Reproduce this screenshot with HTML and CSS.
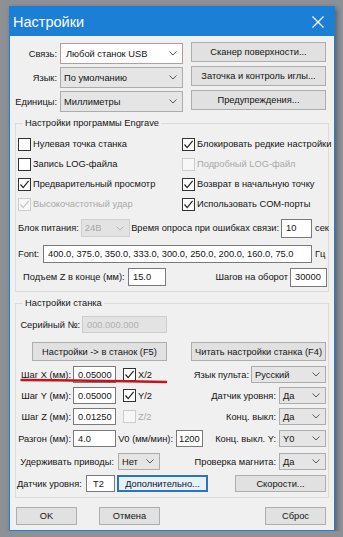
FILE: index.html
```html
<!DOCTYPE html>
<html lang="ru">

<head>
    <meta charset="utf-8">
    <title>Настройки</title>
    <link rel="stylesheet" href="styles.css">
</head>

<body>
    <div class="window">
        <div class="titlebar">
            <span class="title">Настройки</span>
            <svg class="close" viewBox="0 0 12 12">
                <path d="M0.5 0.5 L11.5 11.5 M11.5 0.5 L0.5 11.5" />
            </svg>
        </div>

        <div class="client">
            <div class="top">
                <div class="top-fields">
                    <span class="lbl">Связь:</span>
                    <div class="combo edit">Любой станок USB
                        <svg class="arrow" viewBox="0 0 8 5"><path d="M0.5 0.5 L4 4 L7.5 0.5" /></svg>
                    </div>
                    <span class="lbl">Язык:</span>
                    <div class="combo">По умолчанию
                        <svg class="arrow" viewBox="0 0 8 5"><path d="M0.5 0.5 L4 4 L7.5 0.5" /></svg>
                    </div>
                    <span class="lbl">Единицы:</span>
                    <div class="combo">Миллиметры
                        <svg class="arrow" viewBox="0 0 8 5"><path d="M0.5 0.5 L4 4 L7.5 0.5" /></svg>
                    </div>
                </div>
                <div class="top-buttons">
                    <button class="btn">Сканер поверхности...</button>
                    <button class="btn">Заточка и контроль иглы...</button>
                    <button class="btn">Предупреждения...</button>
                </div>
            </div>

            <fieldset class="group group-prog">
                <legend>Настройки программы Engrave</legend>
                <div class="checks">
                    <div class="check"><span class="box"></span>Нулевая точка станка</div>
                    <div class="check"><span class="box"><svg viewBox="0 0 11 11"><path d="M1.5 5.5 L4.2 8.6 L9.6 1.8" /></svg></span>Блокировать редкие настройки</div>
                    <div class="check"><span class="box"></span>Запись LOG-файла</div>
                    <div class="check disabled"><span class="box"></span>Подробный LOG-файл</div>
                    <div class="check"><span class="box"><svg viewBox="0 0 11 11"><path d="M1.5 5.5 L4.2 8.6 L9.6 1.8" /></svg></span>Предварительный просмотр</div>
                    <div class="check"><span class="box"><svg viewBox="0 0 11 11"><path d="M1.5 5.5 L4.2 8.6 L9.6 1.8" /></svg></span>Возврат в начальную точку</div>
                    <div class="check disabled"><span class="box"><svg viewBox="0 0 11 11"><path d="M1.5 5.5 L4.2 8.6 L9.6 1.8" /></svg></span>Высокочастотный удар</div>
                    <div class="check"><span class="box"><svg viewBox="0 0 11 11"><path d="M1.5 5.5 L4.2 8.6 L9.6 1.8" /></svg></span>Использовать COM-порты</div>
                </div>

                <div class="row row-power">
                    <span class="lbl-power">Блок питания:</span>
                    <div class="combo disabled w-power">24В
                        <svg class="arrow" viewBox="0 0 8 5"><path d="M0.5 0.5 L4 4 L7.5 0.5" /></svg>
                    </div>
                    <span class="lbl-poll">Время опроса при ошибках связи:</span>
                    <div class="field w-poll">10</div>
                    <span class="unit">сек</span>
                </div>

                <div class="row row-font">
                    <span class="lbl-font">Font:</span>
                    <div class="field w-font">400.0, 375.0, 350.0, 333.0, 300.0, 250.0, 200.0, 160.0, 75.0</div>
                    <span class="unit">Гц</span>
                </div>

                <div class="row row-lift">
                    <span class="lbl-lift">Подъем Z в конце (мм):</span>
                    <div class="field w-lift">15.0</div>
                    <span class="lbl-steps">Шагов на оборот</span>
                    <div class="field w-steps">30000</div>
                </div>
            </fieldset>

            <fieldset class="group group-machine">
                <legend>Настройки станка</legend>

                <div class="row row-serial">
                    <span class="lbl-serial">Серийный №:</span>
                    <div class="field disabled w-serial">000.000.000</div>
                </div>

                <div class="row row-buttons">
                    <button class="btn w-wide first">Настройки -&gt; в станок (F5)</button>
                    <button class="btn w-wide">Читать настройки станка (F4)</button>
                </div>

                <div class="row row-step step-x">
                    <span class="lbl-step">Шаг X (мм):</span>
                    <div class="field w-step">0.05000</div>
                    <div class="check half"><span class="box"><svg viewBox="0 0 11 11"><path d="M1.5 5.5 L4.2 8.6 L9.6 1.8" /></svg></span>X/2</div>
                    <div class="right">
                        <span>Язык пульта:</span>
                        <div class="combo w-lang">Русский
                            <svg class="arrow" viewBox="0 0 8 5"><path d="M0.5 0.5 L4 4 L7.5 0.5" /></svg>
                        </div>
                    </div>
                    <svg class="underline" viewBox="0 0 148 6">
                        <path d="M1.5 2 Q 70 2.6 146 4" />
                    </svg>
                </div>

                <div class="row row-step step-y">
                    <span class="lbl-step">Шаг Y (мм):</span>
                    <div class="field w-step">0.05000</div>
                    <div class="check half"><span class="box"><svg viewBox="0 0 11 11"><path d="M1.5 5.5 L4.2 8.6 L9.6 1.8" /></svg></span>Y/2</div>
                    <div class="right">
                        <span>Датчик уровня:</span>
                        <div class="combo w-yn">Да
                            <svg class="arrow" viewBox="0 0 8 5"><path d="M0.5 0.5 L4 4 L7.5 0.5" /></svg>
                        </div>
                    </div>
                </div>

                <div class="row row-step step-z">
                    <span class="lbl-step">Шаг Z (мм):</span>
                    <div class="field w-step">0.01250</div>
                    <div class="check half disabled"><span class="box"></span>Z/2</div>
                    <div class="right">
                        <span>Конц. выкл:</span>
                        <div class="combo w-yn">Да
                            <svg class="arrow" viewBox="0 0 8 5"><path d="M0.5 0.5 L4 4 L7.5 0.5" /></svg>
                        </div>
                    </div>
                </div>

                <div class="row row-step row-accel">
                    <span class="lbl-step">Разгон (мм):</span>
                    <div class="field w-step">4.0</div>
                    <span class="lbl-v0">V0 (мм/мин):</span>
                    <div class="field w-v0">1200</div>
                    <div class="right">
                        <span>Конц. выкл. Y:</span>
                        <div class="combo w-yn">Y0
                            <svg class="arrow" viewBox="0 0 8 5"><path d="M0.5 0.5 L4 4 L7.5 0.5" /></svg>
                        </div>
                    </div>
                </div>

                <div class="row row-step row-hold">
                    <span class="lbl-hold">Удерживать приводы:</span>
                    <div class="combo w-hold">Нет
                        <svg class="arrow" viewBox="0 0 8 5"><path d="M0.5 0.5 L4 4 L7.5 0.5" /></svg>
                    </div>
                    <div class="right">
                        <span>Проверка магнита:</span>
                        <div class="combo w-yn">Да
                            <svg class="arrow" viewBox="0 0 8 5"><path d="M0.5 0.5 L4 4 L7.5 0.5" /></svg>
                        </div>
                    </div>
                </div>

                <div class="row row-step row-sensor">
                    <span class="lbl-sensor">Датчик уровня:</span>
                    <div class="field w-sensor">T2</div>
                    <button class="btn focus w-more">Дополнительно...</button>
                    <button class="btn w-more push">Скорости...</button>
                </div>
            </fieldset>

            <div class="footer">
                <button class="btn w-foot">OK</button>
                <button class="btn w-foot">Отмена</button>
                <button class="btn w-foot push">Сброс</button>
            </div>
        </div>
    </div>
</body>

</html>
```

FILE: styles.css
```css
body {
    margin: 0;
    background-color: #8d9094;
    font-family: "Liberation Sans", Arial, sans-serif;
    font-size: 9.3px;
    color: #141414;
}

.window {
    width: 326px;
    margin: 6px 0 0 9px;
    box-sizing: border-box;
    border: 1px solid #1c7fd6;
    background-color: #f0f0f0;
    box-shadow: 2px 2px 5px rgba(0, 0, 0, 0.35);
}

.titlebar {
    display: flex;
    align-items: center;
    justify-content: space-between;
    height: 29px;
    padding: 0 10px 0 3px;
    background-color: #1c7fd6;
    color: #fff;
}

.title {
    font-size: 14.5px;
}

.close {
    width: 12px;
    height: 12px;
}

.close path {
    fill: none;
    stroke: #fff;
    stroke-width: 1.3;
}

.client {
    padding-bottom: 5px;
}

/* top block: combos on the left, buttons on the right */
.top {
    display: flex;
    padding-top: 6px;
}

.top-fields {
    display: grid;
    grid-template-columns: 47px 123px;
    grid-auto-rows: 21px;
    column-gap: 3px;
    row-gap: 3px;
    margin-top: 1px;
}

.top-fields .lbl {
    align-self: center;
    text-align: right;
}

.top-buttons {
    display: flex;
    flex-direction: column;
    gap: 4px;
    width: 135px;
    margin-left: 8px;
}

.top-buttons .btn {
    height: 20px;
}

/* controls */
.btn {
    box-sizing: border-box;
    height: 19px;
    padding: 0;
    background-color: #e1e1e1;
    border: 1px solid #adadad;
    color: #141414;
    font: inherit;
    white-space: nowrap;
}

.btn.focus {
    border: 2px solid #2f74b5;
    background-color: #e5f1fb;
}

.combo {
    display: flex;
    align-items: center;
    justify-content: space-between;
    box-sizing: border-box;
    height: 17px;
    padding: 0 5px 0 3px;
    background-color: #e5e5e5;
    border: 1px solid #acacac;
    white-space: nowrap;
}

.top-fields .combo {
    height: 21px;
}

.combo.edit {
    background-color: #fff;
    border-color: #b89c9c;
    padding-left: 5px;
}

.combo.disabled {
    background-color: #e3e3e3;
    border-color: #cfcfcf;
    color: #a8a8a8;
}

.arrow {
    flex: none;
    width: 8px;
    height: 5px;
}

.arrow path {
    fill: none;
    stroke: #5a5a5a;
    stroke-width: 1;
}

.combo.disabled .arrow path {
    stroke: #b5b5b5;
}

.field {
    display: flex;
    align-items: center;
    box-sizing: border-box;
    height: 17px;
    padding: 0 4px;
    background-color: #fff;
    border: 1px solid #7a7a7a;
    white-space: nowrap;
    overflow: hidden;
}

.field.disabled {
    background-color: #e3e3e3;
    border-color: #cdcdcd;
    color: #b0b0b0;
}

/* group boxes */
.group {
    margin: 5px 5px 0;
    padding: 5px 2px 5px;
    border: 1px solid #dcdcdc;
    min-width: 0;
}

.group legend {
    margin-left: 5px;
    padding: 0 2px;
    line-height: 12px;
}

.group-machine {
    padding-top: 7px;
}

.checks {
    display: grid;
    grid-template-columns: 164px 1fr;
    grid-auto-rows: 20px;
}

.check {
    display: flex;
    align-items: center;
    gap: 2px;
    white-space: nowrap;
}

.box {
    display: flex;
    align-items: center;
    justify-content: center;
    box-sizing: border-box;
    width: 13px;
    height: 13px;
    background-color: #fff;
    border: 1px solid #333;
}

.box svg {
    width: 11px;
    height: 11px;
}

.box path {
    fill: none;
    stroke: #222;
    stroke-width: 1.2;
}

.check.disabled {
    color: #a8a8a8;
}

.check.disabled .box {
    border-color: #cccccc;
    background-color: #f7f7f7;
}

.check.disabled .box path {
    stroke: #c4c4c4;
}

.row {
    display: flex;
    align-items: center;
    white-space: nowrap;
}

.unit {
    margin-left: 3px;
    width: 11px;
}

/* group 1 rows */
.row-power {
    height: 20px;
    margin-top: 4px;
}

.row-power .combo {
    height: 18px;
}

.lbl-power {
    flex: none;
    margin-right: 2px;
}

.w-power {
    width: 49px;
}

.lbl-poll {
    flex: 1;
    text-align: right;
    padding-right: 2px;
}

.w-poll {
    width: 31px;
    height: 19px;
}

.row-font {
    height: 18px;
    margin-top: 7px;
}

.lbl-font {
    width: 25px;
}

.w-font {
    width: 269px;
    height: 18px;
}

.row-lift {
    height: 18px;
    margin-top: 5px;
}

.lbl-lift {
    width: 105px;
    margin-left: 5px;
}

.w-lift {
    width: 38px;
    height: 18px;
}

.lbl-steps {
    margin-left: auto;
    margin-right: 2px;
}

.w-steps {
    width: 37px;
    height: 19px;
    margin-right: -1px;
}

/* group 2 rows */
.row-serial {
    height: 17px;
}

.lbl-serial {
    width: 62px;
    padding-right: 2px;
    text-align: right;
}

.w-serial {
    width: 85px;
}

.row-buttons {
    margin-top: 9px;
}

.w-wide {
    width: 135px;
}

.w-wide.first {
    margin-left: 14px;
    margin-right: auto;
}

.row-step {
    height: 17px;
}

.step-x {
    position: relative;
    margin-top: 5px;
}

.step-y,
.step-z {
    margin-top: 4px;
}

.row-accel {
    margin-top: 5px;
}

.row-hold {
    margin-top: 6px;
}

.row-sensor {
    margin-top: 5px;
}

.lbl-step {
    width: 53px;
    padding-right: 2px;
    text-align: right;
}

.w-step {
    width: 43px;
}

.check.half {
    margin-left: 7px;
}

.right {
    display: flex;
    align-items: center;
    gap: 3px;
    margin-left: auto;
}

.w-yn {
    width: 47px;
}

.w-lang {
    width: 75px;
}

.step-x .right {
    gap: 2px;
}

.lbl-v0 {
    width: 57px;
    padding-right: 3px;
    text-align: right;
}

.w-v0 {
    width: 27px;
    padding: 0 2px;
}

.lbl-hold {
    width: 96px;
    padding-right: 4px;
    text-align: right;
}

.w-hold {
    width: 42px;
}

.lbl-sensor {
    width: 69px;
    margin-left: -1px;
}

.w-sensor {
    width: 29px;
    padding-left: 6px;
}

.w-more {
    width: 91px;
    height: 17px;
    margin-left: 2px;
}

.push {
    margin-left: auto;
}

.underline {
    position: absolute;
    left: 2px;
    top: 12px;
    width: 148px;
    height: 6px;
}

.underline path {
    fill: none;
    stroke: #c3161c;
    stroke-width: 2.4;
    stroke-linecap: round;
}

/* dialog buttons */
.footer {
    display: flex;
    gap: 22px;
    margin-top: 9px;
    padding: 0 8px 0 6px;
}

.w-foot {
    width: 61px;
    height: 18px;
}
```
